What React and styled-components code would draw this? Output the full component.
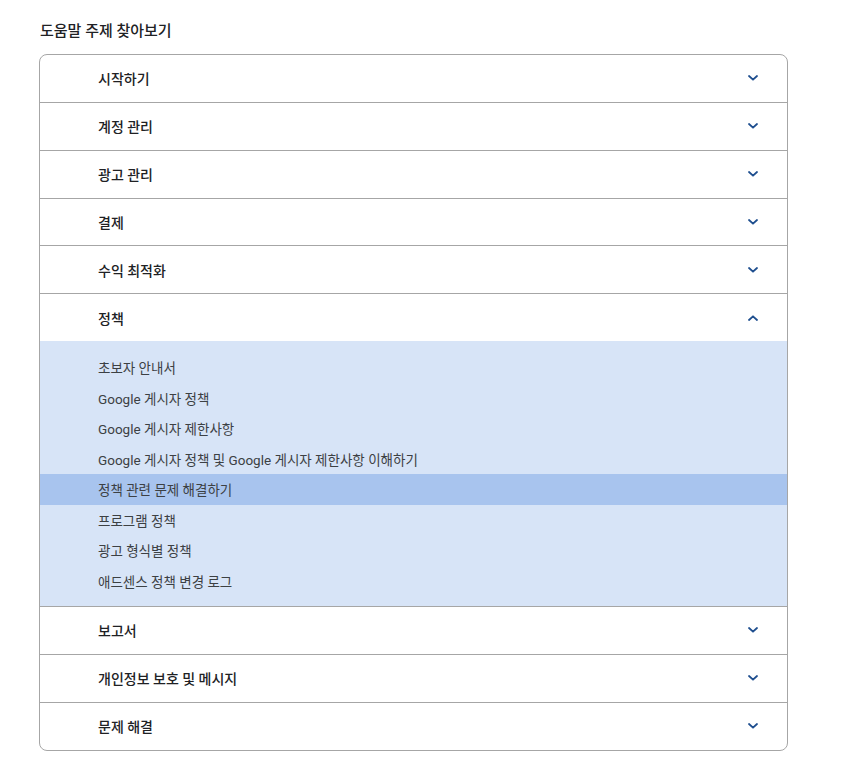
import React from "react";
import styled, { createGlobalStyle } from "styled-components";

const Global = createGlobalStyle`
  html, body { margin: 0; padding: 0; background: #fff; }
  body { font-family: "Roboto", "Noto Sans CJK KR", sans-serif; color: #202124; }
`;

const Page = styled.div`
  padding: 21px 57px 0 39px;
`;

const Title = styled.h2`
  margin: 0 0 13px 1px;
  font-size: 15px;
  font-weight: 500;
  line-height: 20px;
  color: #202124;
`;

const Accordion = styled.div`
  border: 1px solid #a6a6a6;
  border-radius: 8px;
  overflow: hidden;
  width: 747px;
`;

const Section = styled.div`
  & + & { border-top: 1px solid #a6a6a6; }
`;

const Header = styled.div`
  height: 46.85px;
  display: flex;
  align-items: center;
  justify-content: space-between;
  padding: 0 29px 0 58px;
  font-size: 14px;
  font-weight: 500;
  color: #202124;
`;

const Panel = styled.div`
  background: #d7e4f7;
  padding: 11px 0 10px;
`;

const Item = styled.div`
  height: 30.5px;
  display: flex;
  align-items: center;
  padding-left: 58px;
  font-size: 13.5px;
  color: #3c4043;
  background: ${p => (p.$active ? "#a8c4ee" : "transparent")};
`;

const Chevron = ({ up }) => (
  <svg width="10" height="6" viewBox="0 0 10 6">
    <path
      d={up ? "M1 5 L5 1.3 L9 5" : "M1 1 L5 4.7 L9 1"}
      fill="none"
      stroke="#1f4f8f"
      strokeWidth="1.8"
      strokeLinecap="round"
      strokeLinejoin="round"
    />
  </svg>
);

const sections = [
  "시작하기",
  "계정 관리",
  "광고 관리",
  "결제",
  "수익 최적화",
  "정책",
  "보고서",
  "개인정보 보호 및 메시지",
  "문제 해결",
];

const policyItems = [
  "초보자 안내서",
  "Google 게시자 정책",
  "Google 게시자 제한사항",
  "Google 게시자 정책 및 Google 게시자 제한사항 이해하기",
  "정책 관련 문제 해결하기",
  "프로그램 정책",
  "광고 형식별 정책",
  "애드센스 정책 변경 로그",
];

export default function App() {
  return (
    <>
      <Global />
      <Page>
        <Title>도움말 주제 찾아보기</Title>
        <Accordion>
          {sections.map(s => {
            const open = s === "정책";
            return (
              <Section key={s}>
                <Header>
                  <span>{s}</span>
                  <Chevron up={open} />
                </Header>
                {open && (
                  <Panel>
                    {policyItems.map((it, i) => (
                      <Item key={it} $active={i === 4}>{it}</Item>
                    ))}
                  </Panel>
                )}
              </Section>
            );
          })}
        </Accordion>
      </Page>
    </>
  );
}
